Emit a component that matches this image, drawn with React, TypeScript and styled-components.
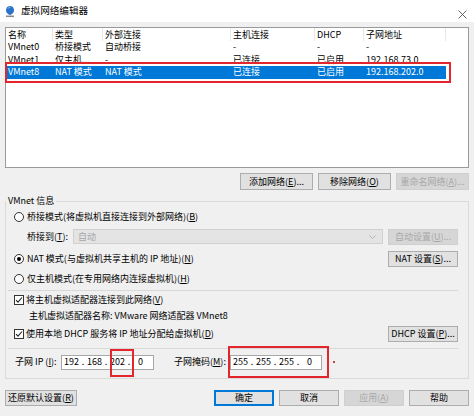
import styled, { createGlobalStyle } from "styled-components";

const GlobalStyle = createGlobalStyle`
  html, body {
    margin: 0;
    padding: 0;
    background: #f0f0f0;
  }
  body {
    font-family: "Noto Sans CJK SC", "Noto Sans", sans-serif;
    font-size: 9px;
    color: #000;
    text-autospace: no-autospace;
    text-spacing-trim: space-all;
  }
  * {
    text-autospace: no-autospace;
  }
`;

const Window = styled.div`
  width: 474px;
  height: 416px;
  background: #f0f0f0;
  display: flex;
  flex-direction: column;
  overflow: hidden;
`;

const TitleBar = styled.div`
  height: 22px;
  background: #fff;
  display: flex;
  align-items: center;
  padding: 0 4px 0 4px;
  gap: 5px;
`;

const Title = styled.span`
  font-size: 9.6px;
  line-height: 12px;
  margin-top: -2px;
`;

const Close = styled.span`
  margin-left: auto;
  margin-right: 3px;
  margin-top: 6px;
  display: flex;
`;

const Body = styled.div`
  display: flex;
  flex-direction: column;
  padding: 5px 5px 0 5px;
`;

const ListView = styled.div`
  position: relative;
  height: 141px;
  border: 1px solid #9a9a9a;
  background: #fff;
  box-sizing: border-box;
`;

const Row = styled.div<{ $selected?: boolean; $header?: boolean }>`
  display: grid;
  grid-template-columns: 47px 50px 128px 84px 49px 82px;
  width: 440px;
  height: ${(p) => (p.$header ? "13px" : "12.5px")};
  align-items: center;
  background: ${(p) => (p.$selected ? "#0078d7" : "transparent")};
  color: ${(p) => (p.$selected ? "#fff" : "#000")};
  line-height: 12px;
`;

const Cell = styled.span<{ $header?: boolean }>`
  padding-left: 2px;
  white-space: nowrap;
  overflow: hidden;
  height: 100%;
  display: flex;
  align-items: center;
  box-sizing: border-box;
  border-right: ${(p) => (p.$header ? "1px solid #e8e8e8" : "none")};
`;

const Highlight = styled.div<{ $l: number; $t: number; $w: number; $h: number }>`
  position: absolute;
  left: ${(p) => p.$l}px;
  top: ${(p) => p.$t}px;
  width: ${(p) => p.$w}px;
  height: ${(p) => p.$h}px;
  border: 2px solid #e3262b;
  box-sizing: border-box;
  pointer-events: none;
`;

const ButtonRow = styled.div<{ $top: number }>`
  display: flex;
  justify-content: flex-end;
  gap: 5px;
  margin-top: ${(p) => p.$top}px;
`;

const Button = styled.button<{ $w: number; $h?: number; $primary?: boolean }>`
  width: ${(p) => p.$w}px;
  height: ${(p) => p.$h ?? 17}px;
  padding: 0;
  margin: 0;
  font: inherit;
  font-size: 9px;
  line-height: 12px;
  color: #000;
  background: #e1e1e1;
  border: 1px solid ${(p) => (p.$primary ? "#0078d7" : "#adadad")};
  box-shadow: ${(p) => (p.$primary ? "inset 0 0 0 1px #0078d7" : "none")};
  box-sizing: border-box;
  white-space: nowrap;
  flex-shrink: 0;
  &:disabled {
    background: #d6d6d6;
    border-color: #cfcfcf;
    color: #a8a8a8;
  }
`;

const GroupBox = styled.fieldset`
  margin: 5px 0 0 0;
  border: 1px solid #dadada;
  padding: 0 10px 3px 2px;
  min-width: 0;
  display: flex;
  flex-direction: column;
`;

const Legend = styled.legend`
  padding: 0 2px;
  margin-left: -2px;
  line-height: 12px;
  font-size: 9px;
`;

const OptionRow = styled.div<{ $h: number; $pad?: number }>`
  height: ${(p) => p.$h}px;
  display: flex;
  align-items: center;
  padding-left: ${(p) => p.$pad ?? 6}px;
  gap: 3px;
  line-height: 12px;
  white-space: nowrap;
`;

const Radio = styled.span<{ $checked?: boolean }>`
  width: 10px;
  height: 10px;
  border-radius: 50%;
  border: 1px solid #333;
  background: #fff;
  box-sizing: border-box;
  display: flex;
  align-items: center;
  justify-content: center;
  flex-shrink: 0;
  &::after {
    content: "";
    width: 4px;
    height: 4px;
    border-radius: 50%;
    background: ${(p) => (p.$checked ? "#000" : "transparent")};
  }
`;

const Check = styled.span`
  width: 10px;
  height: 10px;
  border: 1px solid #333;
  background: #fff;
  box-sizing: border-box;
  display: flex;
  align-items: center;
  justify-content: center;
  flex-shrink: 0;
`;

const FieldLabel = styled.span<{ $w: number }>`
  width: ${(p) => p.$w}px;
  flex-shrink: 0;
`;

const Combo = styled.div`
  flex: 1;
  height: 15px;
  background: #e4e4e4;
  border: 1px solid #d0d0d0;
  box-sizing: border-box;
  display: flex;
  align-items: center;
  padding: 0 6px 0 4px;
  color: #a6a6a6;
  margin-right: 5px;
`;

const Chevron = styled.span`
  margin-left: auto;
  display: flex;
`;

const Separator = styled.div<{ $top: number }>`
  height: 1px;
  background: #d8d8d8;
  margin-top: ${(p) => p.$top}px;
`;

const Spacer = styled.span`
  flex: 1;
`;

const IpField = styled.div<{ $w: number }>`
  position: relative;
  width: ${(p) => p.$w}px;
  height: 15px;
  background: #fff;
  border: 1px solid #a8a8a8;
  box-sizing: border-box;
  display: flex;
  align-items: center;
  flex-shrink: 0;
`;

const Octet = styled.span`
  width: 19px;
  text-align: center;
`;

const Dot = styled.span`
  width: 4px;
  text-align: center;
`;

const Mark = styled.span`
  position: absolute;
  left: 102px;
  top: 5px;
  width: 2px;
  height: 2px;
  background: #b44;
`;

const BottomRow = styled.div`
  display: flex;
  margin-top: 11px;
  gap: 5px;
`;

function AppIcon() {
  return (
    <svg width="12" height="13" viewBox="0 0 12 13">
      <path d="M6 1 C2.5 1 2 4 2 5.5 C2 8 4.5 9.5 6 10 C7.5 9.5 10 8 10 5.5 C10 4 9.5 1 6 1 Z" fill="#2a73c8" />
      <path d="M4 3.5 C4.5 2.5 5.5 2.2 6.3 2.3" stroke="#9cc6f0" strokeWidth="1" fill="none" />
      <rect x="2" y="10.5" width="8" height="1.6" fill="#8a8a8a" />
    </svg>
  );
}

function CheckMark() {
  return (
    <svg width="8" height="8" viewBox="0 0 8 8">
      <path d="M1 4.2 L3 6.2 L7 1.5" stroke="#222" strokeWidth="1.1" fill="none" />
    </svg>
  );
}

function Ip({ parts }: { parts: string[] }) {
  return (
    <>
      {parts.map((p, i) => (
        <span key={i} style={{ display: "contents" }}>
          <Octet>{p}</Octet>
          {i < parts.length - 1 && <Dot>.</Dot>}
        </span>
      ))}
    </>
  );
}

const networks = [
  ["VMnet0", "桥接模式", "自动桥接", "-", "-", "-"],
  ["VMnet1", "仅主机...", "-", "已连接", "已启用", "192.168.73.0"],
  ["VMnet8", "NAT 模式", "NAT 模式", "已连接", "已启用", "192.168.202.0"],
];

export default function App() {
  return (
    <Window>
      <GlobalStyle />
      <TitleBar>
        <AppIcon />
        <Title>虚拟网络编辑器</Title>
        <Close>
          <svg width="9" height="9" viewBox="0 0 9 9">
            <path d="M0.5 0.5 L8.5 8.5 M8.5 0.5 L0.5 8.5" stroke="#555" strokeWidth="0.9" />
          </svg>
        </Close>
      </TitleBar>
      <Body>
        <ListView>
          <Row $header>
            {["名称", "类型", "外部连接", "主机连接", "DHCP", "子网地址"].map((h) => (
              <Cell key={h} $header>
                {h}
              </Cell>
            ))}
          </Row>
          {networks.map((n, i) => (
            <Row key={n[0]} $selected={i === 2}>
              {n.map((c, j) => (
                <Cell key={j}>{c}</Cell>
              ))}
            </Row>
          ))}
          <Highlight $l={-1} $t={34} $w={446} $h={21} />
        </ListView>

        <ButtonRow $top={5}>
          <Button $w={73}>
            添加网络(<u>E</u>)...
          </Button>
          <Button $w={73}>
            移除网络(<u>O</u>)
          </Button>
          <Button $w={73} disabled>
            重命名网络(<u>A</u>)...
          </Button>
        </ButtonRow>

        <GroupBox>
          <Legend>VMnet 信息</Legend>
          <OptionRow $h={20}>
            <Radio />
            <span>
              桥接模式(将虚拟机直接连接到外部网络)(<u>B</u>)
            </span>
          </OptionRow>
          <OptionRow $h={19} $pad={19} style={{ marginBottom: 3, gap: 0 }}>
            <FieldLabel $w={46}>
              桥接到(<u>T</u>):
            </FieldLabel>
            <Combo>
              自动
              <Chevron>
                <svg width="7" height="4" viewBox="0 0 7 4">
                  <path d="M0.5 0.5 L3.5 3.5 L6.5 0.5" stroke="#b5b5b5" fill="none" />
                </svg>
              </Chevron>
            </Combo>
            <Button $w={70} $h={16} disabled>
              自动设置(<u>U</u>)...
            </Button>
          </OptionRow>
          <OptionRow $h={20}>
            <Radio $checked />
            <span>
              NAT 模式(与虚拟机共享主机的 IP 地址)(<u>N</u>)
            </span>
            <Spacer />
            <Button $w={70} $h={16}>
              NAT 设置(<u>S</u>)...
            </Button>
          </OptionRow>
          <OptionRow $h={20}>
            <Radio />
            <span>
              仅主机模式(在专用网络内连接虚拟机)(<u>H</u>)
            </span>
          </OptionRow>
          <Separator $top={1} />
          <OptionRow $h={18} style={{ gap: 2 }}>
            <Check>
              <CheckMark />
            </Check>
            <span>
              将主机虚拟适配器连接到此网络(<u>V</u>)
            </span>
          </OptionRow>
          <OptionRow $h={14} $pad={21}>
            主机虚拟适配器名称: VMware 网络适配器 VMnet8
          </OptionRow>
          <OptionRow $h={22} style={{ gap: 2 }}>
            <Check>
              <CheckMark />
            </Check>
            <span>
              使用本地 DHCP 服务将 IP 地址分配给虚拟机(<u>D</u>)
            </span>
            <Spacer />
            <Button $w={70} $h={16}>
              DHCP 设置(<u>P</u>)...
            </Button>
          </OptionRow>
          <Separator $top={3} />
          <OptionRow $h={26} $pad={7} style={{ gap: 0 }}>
            <FieldLabel $w={46}>
              子网 IP (<u>I</u>):
            </FieldLabel>
            <IpField $w={93}>
              <Ip parts={["192", "168", "202", "0"]} />
              <Highlight $l={48} $t={-7} $w={24} $h={28} />
            </IpField>
            <FieldLabel $w={56} style={{ marginLeft: 20 }}>
              子网掩码(<u>M</u>):
            </FieldLabel>
            <IpField $w={92}>
              <Ip parts={["255", "255", "255", "0"]} />
              <Highlight $l={-3} $t={-10} $w={101} $h={32} />
              <Mark />
            </IpField>
          </OptionRow>
        </GroupBox>

        <BottomRow>
          <Button $w={72} $h={16}>
            还原默认设置(<u>R</u>)
          </Button>
          <Spacer />
          <Button $w={60} $h={16} $primary>
            确定
          </Button>
          <Button $w={60} $h={16}>
            取消
          </Button>
          <Button $w={60} $h={16} disabled>
            应用(<u>A</u>)
          </Button>
          <Button $w={60} $h={16}>
            帮助
          </Button>
        </BottomRow>
      </Body>
    </Window>
  );
}
